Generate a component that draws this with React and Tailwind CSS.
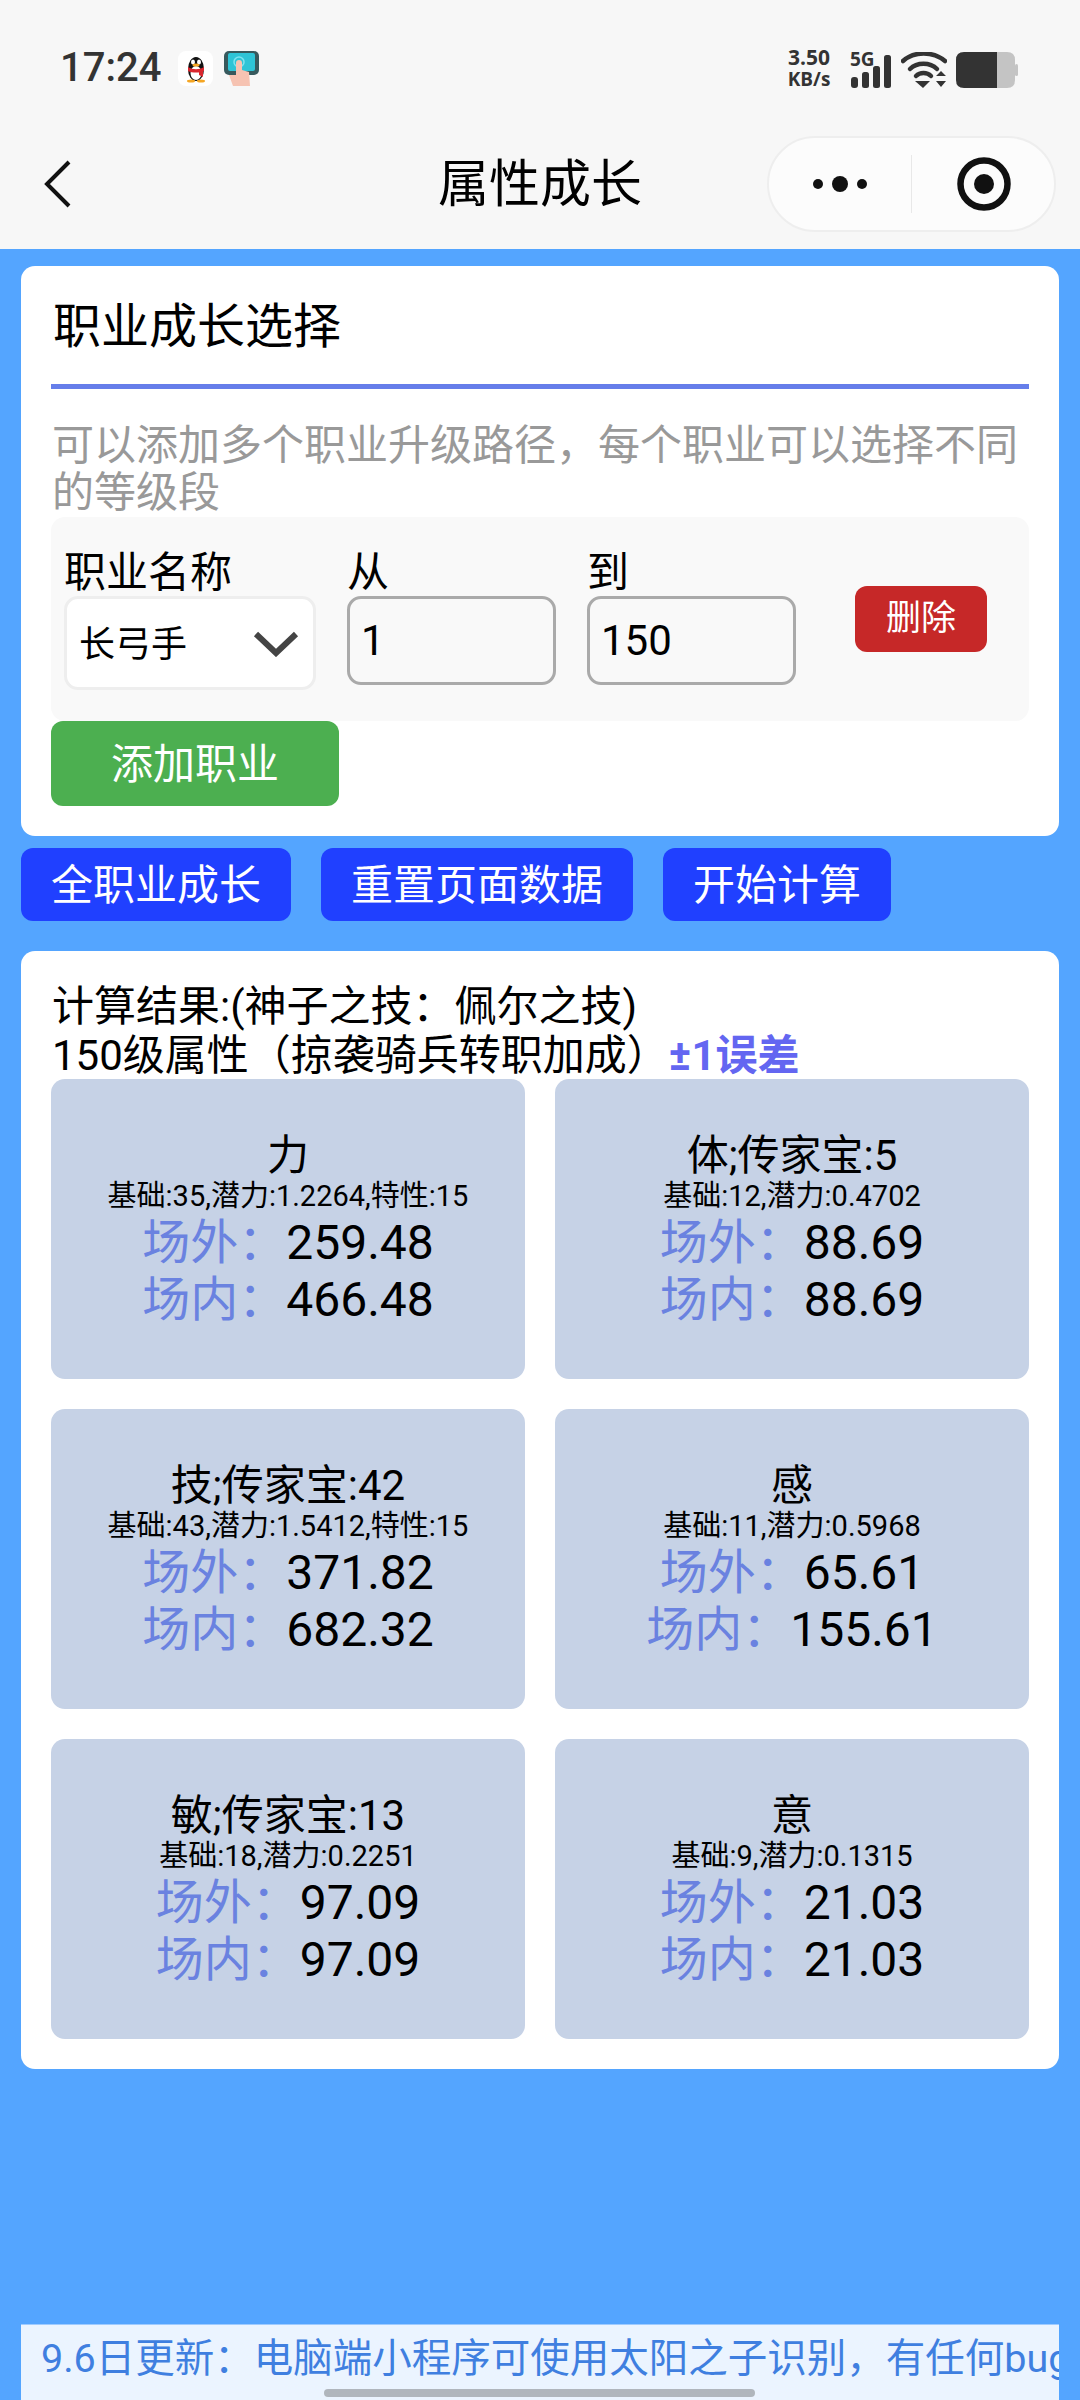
const stats = [
  { title: "力", sub: "基础:35,潜力:1.2264,特性:15", out: "259.48", inside: "466.48" },
  { title: "体;传家宝:5", sub: "基础:12,潜力:0.4702", out: "88.69", inside: "88.69" },
  { title: "技;传家宝:42", sub: "基础:43,潜力:1.5412,特性:15", out: "371.82", inside: "682.32" },
  { title: "感", sub: "基础:11,潜力:0.5968", out: "65.61", inside: "155.61" },
  { title: "敏;传家宝:13", sub: "基础:18,潜力:0.2251", out: "97.09", inside: "97.09" },
  { title: "意", sub: "基础:9,潜力:0.1315", out: "21.03", inside: "21.03" },
];

function QQIcon() {
  return (
    <div className="w-[35px] h-[35px] rounded-[8px] bg-white flex items-center justify-center">
      <svg width="24" height="30" viewBox="0 0 24 30">
        <ellipse cx="12" cy="16" rx="8" ry="12" fill="#111" />
        <ellipse cx="12" cy="20" rx="5.5" ry="7" fill="#fff" />
        <ellipse cx="9" cy="9" rx="2" ry="2.6" fill="#fff" />
        <ellipse cx="15" cy="9" rx="2" ry="2.6" fill="#fff" />
        <ellipse cx="12" cy="12" rx="3.5" ry="1.5" fill="#f5a623" />
        <path d="M4 14 C9 17 15 17 20 14 L20 18 C16 20 8 20 4 18 Z" fill="#d9272e" />
        <path d="M15 18 L19 18 L19 24 L15 22 Z" fill="#d9272e" />
        <ellipse cx="7" cy="28" rx="4" ry="1.5" fill="#f5a623" />
        <ellipse cx="17" cy="28" rx="4" ry="1.5" fill="#f5a623" />
      </svg>
    </div>
  );
}

function TouchIcon() {
  return (
    <svg width="35" height="35" viewBox="0 0 35 35">
      <rect x="0" y="0" width="35" height="24" rx="5" fill="#37595d" />
      <rect x="4" y="2" width="27" height="18" rx="2" fill="#2ec4d6" />
      <circle cx="15" cy="11" r="5" fill="none" stroke="#7fe3ef" strokeWidth="1.5" />
      <path d="M12 12 a3 3 0 0 1 6 0 L18 19 L25 21 L26 35 L9 35 L5 24 L12 24 Z" fill="#f6c3b2" />
    </svg>
  );
}

function StatusRight() {
  return (
    <div className="flex items-center text-[#333]">
      <div className="w-[46px] -ml-[3px] -mt-[3px] flex flex-col items-center text-[21px] leading-[22px] font-bold font-['Open_Sans',sans-serif]">
        <span>3.50</span>
        <span className="text-[19px]">KB/s</span>
      </div>
      <div className="ml-[18px] w-[41px] h-[36px] relative">
        <span className="absolute left-0 top-[-4px] text-[19px] leading-[22px] font-bold font-['Open_Sans',sans-serif]">5G</span>
        <svg width="41" height="36" viewBox="0 0 41 36" className="absolute left-0 top-0">
          <rect x="1" y="25" width="7" height="11" rx="3" fill="#333" />
          <rect x="12" y="20" width="7" height="16" rx="2.5" fill="#333" />
          <rect x="23" y="14" width="7" height="22" rx="2.5" fill="#333" />
          <rect x="34" y="3" width="7" height="33" rx="2.5" fill="#333" />
        </svg>
      </div>
      <svg width="46" height="36" viewBox="0 0 46 36" className="ml-[10px]">
        <path d="M2 9 C13 -1 32 -1 44 9" fill="none" stroke="#333" strokeWidth="4.5" strokeLinecap="round" />
        <path d="M9 17 C16 10 29 10 36 17" fill="none" stroke="#333" strokeWidth="4.5" strokeLinecap="round" />
        <path d="M15 24 C19 20 26 20 30 24" fill="none" stroke="#333" strokeWidth="4.5" strokeLinecap="round" />
        <path d="M14 29 L29 29 L22 36 Z" fill="#333" />
        <path d="M35 24 L40 19 L45 24 Z M35 29 L45 29 L40 35 Z" fill="#333" />
      </svg>
      <svg width="62" height="36" viewBox="0 0 62 36" className="ml-[9px]">
        <path d="M41 0 L51 0 Q59 0 59 8 L59 28 Q59 36 51 36 L41 36 Z" fill="#c4c4c4" />
        <path d="M8 0 L41 0 L41 36 L8 36 Q0 36 0 28 L0 8 Q0 0 8 0 Z" fill="#333" />
        <rect x="59" y="12" width="3" height="12" rx="1.5" fill="#c4c4c4" />
      </svg>
    </div>
  );
}

function Capsule() {
  return (
    <div className="w-[289px] h-[96px] rounded-[48px] border-2 border-[#eeeeee] bg-[#fcfcfc] flex items-center">
      <div className="w-[142px] h-full flex items-center justify-center">
        <svg width="58" height="16" viewBox="0 0 58 16">
          <circle cx="7" cy="8" r="5" fill="#111" />
          <circle cx="29" cy="8" r="8" fill="#111" />
          <circle cx="51" cy="8" r="5" fill="#111" />
        </svg>
      </div>
      <div className="w-px h-[58px] bg-[#e8e8e8]" />
      <div className="flex-1 flex items-center justify-center pl-[2px]">
        <svg width="54" height="54" viewBox="0 0 54 54">
          <circle cx="27" cy="27" r="23.5" fill="none" stroke="#111" strokeWidth="6.5" />
          <circle cx="27" cy="27" r="10" fill="#111" />
        </svg>
      </div>
    </div>
  );
}

function Field({ label, value }) {
  return (
    <div className="w-[209px] flex flex-col">
      <label className="text-[42px] leading-[54px] text-black h-[50px]">{label}</label>
      <input
        readOnly
        value={value}
        className="w-full h-[89px] border-[3px] border-[#aaaaaa] rounded-[14px] bg-[#f9f9f9] px-[11px] text-[42px] text-black outline-none"
      />
    </div>
  );
}

function StatCell({ stat }) {
  return (
    <div className="h-[300px] rounded-[14px] bg-[#c6d2e6] pt-[52px] flex flex-col items-center text-black">
      <div className="text-[42px] leading-[50px]">{stat.title}</div>
      <div className="text-[29px] leading-[38px] -mt-[4px]">{stat.sub}</div>
      <div className="text-[48px] leading-[57px] -mt-[1px]">
        <span className="text-[#6a82e0]">场外：</span>
        {stat.out}
      </div>
      <div className="text-[48px] leading-[57px]">
        <span className="text-[#6a82e0]">场内：</span>
        {stat.inside}
      </div>
    </div>
  );
}

export default function App() {
  return (
    <div className="relative w-[1080px] h-[2400px] overflow-hidden bg-[#54a5ff] flex flex-col font-['Roboto','Noto_Sans_CJK_SC',sans-serif]">
      <div className="h-[249px] shrink-0 bg-[#f7f7f7] flex flex-col">
        <div className="h-[136px] px-[60px] pt-[49px] flex items-start justify-between pr-[62px]">
          <div className="flex items-center h-[38px]">
            <span className="text-[40px] leading-[38px] font-medium text-[#333] font-['Roboto',sans-serif]">17:24</span>
            <div className="ml-[17px]">
              <QQIcon />
            </div>
            <div className="ml-[11px]">
              <TouchIcon />
            </div>
          </div>
          <StatusRight />
        </div>
        <div className="relative h-[96px] flex items-center justify-end pr-[24px]">
          <svg width="28" height="48" viewBox="0 0 28 48" className="absolute left-[44px] top-[24px]">
            <path d="M25 2 L3 24 L25 46" fill="none" stroke="#111" strokeWidth="4" />
          </svg>
          <div className="absolute left-[438px] top-[17px] text-[51px] leading-[64px] text-black">属性成长</div>
          <Capsule />
        </div>
      </div>

      <div className="mx-[21px] mt-[17px] h-[570px] rounded-[14px] bg-white px-[30px] flex flex-col">
        <h1 className="h-[123px] shrink-0 pt-[33px] pl-[2px] text-[48px] leading-[56px] text-black border-b-[5px] border-[#667eea]">
          职业成长选择
        </h1>
        <p className="mt-[33px] text-[42px] leading-[47px] text-[#999999] pl-[1px]">
          可以添加多个职业升级路径，每个职业可以选择不同的等级段
        </p>
        <div className="mt-[1px] h-[204px] shrink-0 rounded-[14px] bg-[#f9f9f9] pl-[13px] pt-[29px] flex">
          <div className="w-[252px] flex flex-col">
            <label className="text-[42px] leading-[54px] text-black h-[50px]">职业名称</label>
            <div className="h-[94px] rounded-[14px] border-[3px] border-[#eeeeee] bg-white pl-[12px] pr-[14px] pt-[1px] flex items-center justify-between">
              <span className="text-[36px] leading-[50px] text-black pt-[2px]">长弓手</span>
              <svg width="46" height="26" viewBox="0 0 46 26">
                <path d="M3 3 L23 22 L43 3" fill="none" stroke="#444" strokeWidth="6" />
              </svg>
            </div>
          </div>
          <div className="ml-[31px]">
            <Field label="从" value="1" />
          </div>
          <div className="ml-[31px]">
            <Field label="到" value="150" />
          </div>
          <button className="ml-[59px] mt-[40px] w-[132px] h-[66px] rounded-[12px] bg-[#c62828] text-white text-[35px]">
            删除
          </button>
        </div>
        <button className="w-[288px] h-[85px] shrink-0 rounded-[12px] bg-[#4caf50] pt-[2px] text-white text-[42px]">
          添加职业
        </button>
      </div>

      <div className="mx-[21px] mt-[12px] flex gap-[30px]">
        <button className="w-[270px] h-[73px] rounded-[12px] bg-[#2040ff] pt-[2px] text-white text-[42px]">全职业成长</button>
        <button className="w-[312px] h-[73px] rounded-[12px] bg-[#2040ff] pt-[2px] text-white text-[42px]">重置页面数据</button>
        <button className="w-[228px] h-[73px] rounded-[12px] bg-[#2040ff] pt-[2px] text-white text-[42px]">开始计算</button>
      </div>

      <div className="mx-[21px] mt-[30px] h-[1118px] rounded-[14px] bg-white px-[30px] pt-[31px]">
        <div className="text-[42px] leading-[49px] text-black pl-[1px] h-[97px]">
          <div>计算结果:(神子之技：佩尔之技)</div>
          <div>
            150级属性（掠袭骑兵转职加成）
            <span className="font-bold text-[#6366f1]">±1误差</span>
          </div>
        </div>
        <div className="grid grid-cols-2 gap-[30px]">
          {stats.map((s) => (
            <StatCell key={s.title} stat={s} />
          ))}
        </div>
      </div>

      <div className="mt-auto mx-[21px] h-[76px] bg-[#ebf4ff] border-t border-[#9fcbff] pl-[20px] overflow-hidden whitespace-nowrap text-[39.5px] leading-[68px] text-[#3f7fe0]">
        9.6日更新：电脑端小程序可使用太阳之子识别，有任何bug
      </div>
      <div className="absolute left-[324px] top-[2389px] w-[431px] h-[8px] rounded-full bg-[#b0b6bd]" />
    </div>
  );
}
